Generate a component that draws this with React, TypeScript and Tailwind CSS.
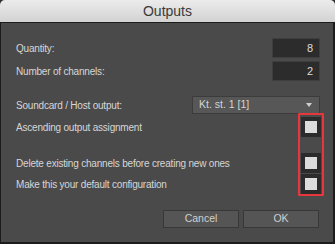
const label = "text-[10px] tracking-[-0.2px] text-[#d6d6d6]"

function Checkbox() {
  return (
    <div className="w-[20px] h-[20px] bg-[#2b2b2b] flex items-center justify-center">
      <div className="w-[12px] h-[12px] bg-[#dcdcdc]" />
    </div>
  )
}

function NumberField({ value }: { value: string }) {
  return (
    <div className="w-[48px] h-[20px] mr-[1px] bg-[#2c2c2c] border border-[#3e3e3e] flex items-center justify-end pr-[6px] text-[11px] text-[#dedede]">
      {value}
    </div>
  )
}

function Button({ children }: { children: string }) {
  return (
    <div className="w-[76px] h-[18px] bg-[#555555] border border-[#383838] flex items-center justify-center text-[10.5px] text-[#d0d0d0]">
      {children}
    </div>
  )
}

export default function App() {
  return (
    <div className="w-[335px] h-[244px] bg-[#2e2e2e]" style={{ fontFamily: '"Liberation Sans", Arial, sans-serif' }}>
      <div className="relative w-full h-full flex flex-col">
        <div className="h-[23px] rounded-t-[5px] bg-gradient-to-b from-[#ececec] to-[#d2d2d2] border-b border-[#1c1c1c] flex items-center justify-center text-[14px] text-[#3a3a3a]">
          Outputs
        </div>
        <div className="flex-1 bg-[#4a4a4a] border-l border-r-2 border-b-2 border-[#1c1c1c] pl-[15px] pr-[12px] pt-[15px] flex flex-col">
          <div className="h-[20px] flex items-center justify-between">
            <span className={label}>Quantity:</span>
            <NumberField value="8" />
          </div>
          <div className="h-[20px] mt-[3px] flex items-center justify-between">
            <span className={label}>Number of channels:</span>
            <NumberField value="2" />
          </div>
          <div className="h-[18px] mt-[15px] flex items-center justify-between">
            <span className={label}>Soundcard / Host output:</span>
            <div className="w-[128px] h-[18px] mr-[1px] bg-[#575757] border border-[#3c3c3c] flex items-center justify-between pl-[6px] pr-[7px] text-[10.5px] text-[#d4d4d4]">
              <span>Kt. st. 1 [1]</span>
              <svg width="6" height="4" viewBox="0 0 6 4"><path d="M0 0h6L3 4z" fill="#d0d0d0" /></svg>
            </div>
          </div>
          <div className="h-[20px] mt-[3px] flex items-center justify-between">
            <span className={label}>Ascending output assignment</span>
            <Checkbox />
          </div>
          <div className="h-[20px] mt-[16px] flex items-center justify-between">
            <span className={label}>Delete existing channels before creating new ones</span>
            <Checkbox />
          </div>
          <div className="h-[20px] mt-[1px] flex items-center justify-between">
            <span className={label}>Make this your default configuration</span>
            <Checkbox />
          </div>
          <div className="mt-[16px] flex justify-end gap-[4px] mr-[2px]">
            <Button>Cancel</Button>
            <Button>OK</Button>
          </div>
        </div>
        <div className="absolute left-[298px] top-[113px] w-[26px] h-[83px] border-2 border-[#e8363d] rounded-[1px]" />
      </div>
    </div>
  )
}
